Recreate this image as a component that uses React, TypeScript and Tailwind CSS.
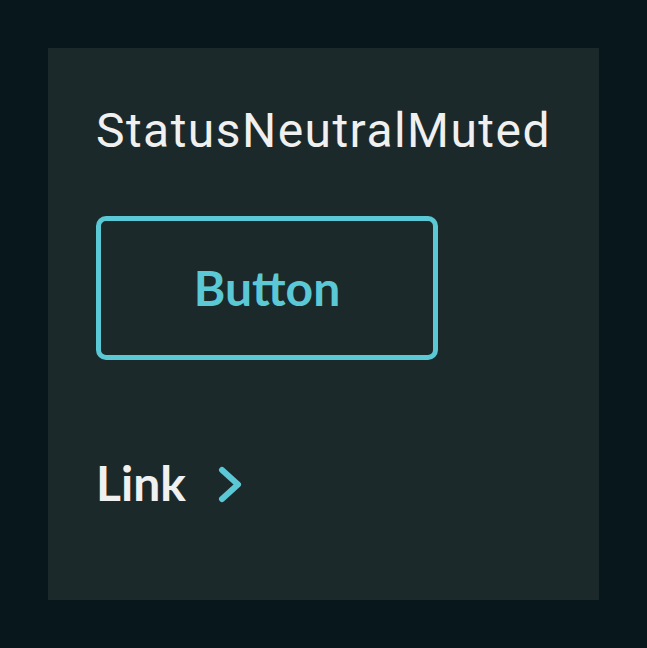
export default function App() {
  return (
    <div className="min-h-screen w-full bg-[#07171b] p-12">
      <div className="flex h-[552px] w-[551px] flex-col bg-[#1c292b] px-12 pt-[59px]">
        <h1 className="font-['Roboto',sans-serif] text-[48px] font-normal leading-none tracking-[1.45px] text-[#f0f0f0]">
          StatusNeutralMuted
        </h1>
        <button className="mt-[61px] flex h-[144px] w-[342px] items-center justify-center rounded-[10px] border-[5px] border-[#5ac8d5] bg-transparent font-['Lato',sans-serif] text-[48px] font-bold text-[#5ac8d5]">
          Button
        </button>
        <a className="mt-[99px] flex items-center gap-[31px] font-['Lato',sans-serif] text-[48px] font-bold leading-none text-[#f0f0f0]">
          Link
          <svg width="27" height="38" viewBox="0 0 27 38" fill="none" className="mt-[3px]">
            <path d="M5 4l16 14.5L5 33" stroke="#5ac8d5" strokeWidth="6" strokeLinecap="round" strokeLinejoin="round" />
          </svg>
        </a>
      </div>
    </div>
  );
}
